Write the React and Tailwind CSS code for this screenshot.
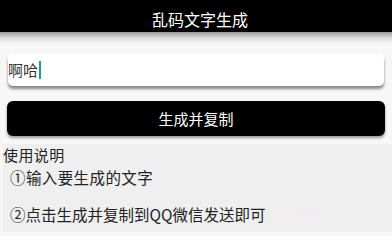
export default function App() {
  return (
    <div
      className="w-[392px] h-[236px] overflow-hidden bg-[#f7f7f7] relative"
      style={{ fontFamily: '"Noto Sans CJK SC", "Noto Sans", sans-serif' }}
    >
      {/* title bar */}
      <div className="h-[32px] bg-black flex items-end justify-center pb-[2px]">
        <span className="text-white text-[16px] leading-[22px] pl-[8px]">乱码文字生成</span>
      </div>
      <div className="h-[12px] bg-gradient-to-b from-[#9a9a9a] via-[#dcdcdc] to-[#f7f7f7]" />

      {/* input */}
      <div className="px-[8px] pt-[10px]">
        <div className="h-[32px] bg-white rounded-[5px] shadow-[0_3px_3px_rgba(0,0,0,0.45)] flex items-center">
          <span className="text-[#333] text-[15px] leading-[20px]">啊哈</span>
          <span className="w-[2px] h-[18px] bg-[#1a9e8c] ml-[1px]" />
        </div>
      </div>

      {/* button */}
      <div className="px-[7px] pt-[15px]">
        <div className="h-[35px] bg-black rounded-[6px] shadow-[0_2px_3px_rgba(0,0,0,0.4)] flex items-center justify-center">
          <span className="text-white text-[15px] leading-[20px]">生成并复制</span>
        </div>
      </div>

      {/* help */}
      <div className="ml-[3px] mt-[8px] h-[88px] bg-[#efefef] text-[#222] relative">
        <div className="text-[15px] leading-[22px] tracking-[0.4px]">使用说明</div>
        <div className="text-[15.5px] leading-[22px] pl-[7px] tracking-[0.4px]">①输入要生成的文字</div>
        <div className="text-[15.5px] leading-[22px] pl-[7px] mt-[15px]">②点击生成并复制到QQ微信发送即可</div>
        <span
          className="absolute left-[275px] top-[60px] text-[17px] leading-[20px] text-[#f6eaf3]"
          style={{ fontFamily: '"Liberation Sans", sans-serif' }}
        >
          .COM
        </span>
      </div>
    </div>
  )
}
